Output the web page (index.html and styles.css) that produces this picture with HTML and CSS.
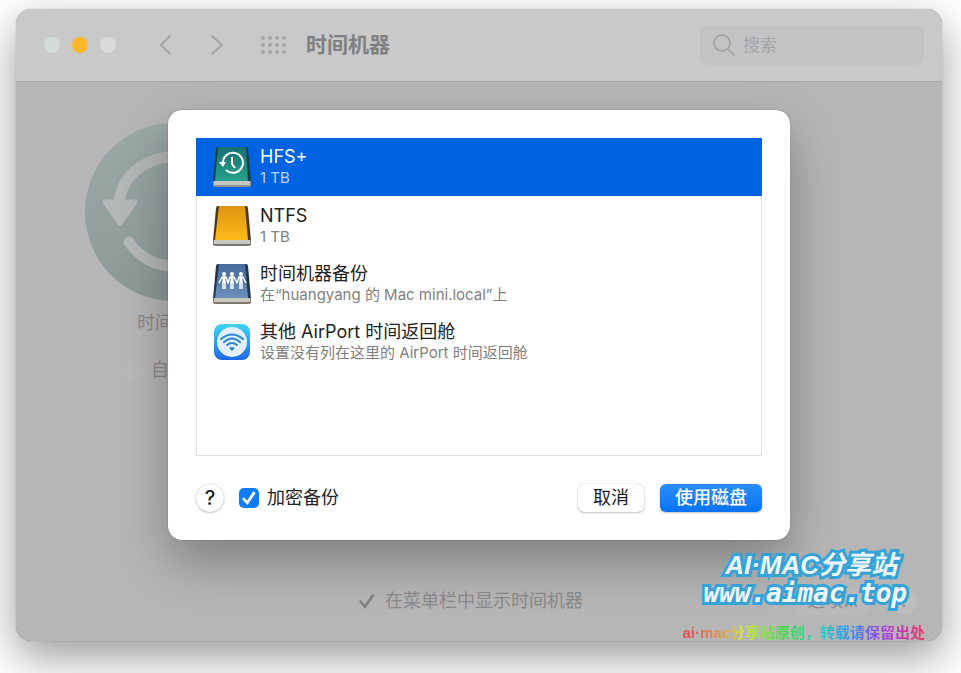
FILE: index.html
```
<!DOCTYPE html>
<html lang="zh-CN">
<head>
    <meta charset="UTF-8">
    <meta name="viewport" content="width=device-width, initial-scale=1.0">
    <title>时间机器</title>
    <link rel="stylesheet" href="styles.css">
</head>
<body>
    <div class="window">
        <header class="toolbar">
            <div class="lights">
                <span class="light light-close"></span>
                <span class="light light-min"></span>
                <span class="light"></span>
            </div>
            <div class="nav">
                <button class="icon-btn" aria-label="返回">
                    <svg width="14" height="22" viewBox="0 0 14 22"><path d="M11 2L2 11l9 9"/></svg>
                </button>
                <button class="icon-btn" aria-label="前进">
                    <svg width="14" height="22" viewBox="0 0 14 22"><path d="M2 2l10 9-10 9"/></svg>
                </button>
            </div>
            <button class="icon-btn grid-btn" aria-label="显示全部">
                <svg width="26" height="20" viewBox="0 0 26 20">
                    <path class="dots" d="M3 3h.01M10 3h.01M17 3h.01M24 3h.01M3 10h.01M10 10h.01M17 10h.01M24 10h.01M3 17h.01M10 17h.01M17 17h.01M24 17h.01"/>
                </svg>
            </button>
            <h1 class="title">时间机器</h1>
            <div class="search">
                <svg width="24" height="24" viewBox="0 0 24 24"><circle cx="10" cy="10" r="8"/><path d="M16 16l6 6"/></svg>
                <input class="search-input" type="search" placeholder="搜索" aria-label="搜索">
            </div>
        </header>

        <main class="content">
            <section class="machine">
                <svg class="machine-icon" width="176" height="178" viewBox="0 0 176 178">
                    <defs>
                        <linearGradient id="machine" x1="0" y1="0" x2="0" y2="1">
                            <stop offset="0" stop-color="#9ba9a7"/>
                            <stop offset="1" stop-color="#8d9997"/>
                        </linearGradient>
                    </defs>
                    <ellipse cx="88" cy="89" rx="88" ry="89" fill="url(#machine)"/>
                    <path class="arrow" d="M34 80C36 54 60 34 88 34c30 0 55 25 55 55s-25 54-55 54c-18 0-34-9-44-24"/>
                    <path class="arrow-head" d="M20 79h30L35 100z"/>
                    <path class="arrow" d="M100 58v31l20 18"/>
                </svg>
                <p class="machine-name">时间机器</p>
                <label class="auto"><input class="auto-check" type="checkbox">自动备份</label>
            </section>
            <footer class="options">
                <label class="menubar">
                    <input class="menubar-check" type="checkbox" checked>在菜单栏中显示时间机器
                </label>
                <button class="options-btn">选项…</button>
                <button class="options-help" aria-label="帮助">?</button>
            </footer>
        </main>

        <div class="dialog" role="dialog" aria-label="选择磁盘">
            <ul class="disk-list">
                <li class="disk selected">
                    <svg class="disk-icon" width="40" height="42" viewBox="0 0 40 42">
                        <path d="M6 1h28q2 0 2 2l3 33H1L4 3q0-2 2-2z" fill="#123f44"/>
                        <path d="M6 1h28l2 34H3z" fill="url(#teal)"/>
                        <path d="M1 35h38v4q0 2-3 2H4q-3 0-3-2z" fill="#8f948f"/>
                        <path d="M2 35h36v4H2z" fill="#c3c8c2"/>
                        <path d="M11 18a10 10 0 1 1 3 6M20 11v7l3 4" fill="none" stroke="#fff" stroke-width="2"/>
                        <path d="M7 16h7l-3 5z" fill="#fff"/>
                        <defs>
                            <linearGradient id="teal" x1="0" y1="0" x2="0" y2="1">
                                <stop offset="0" stop-color="#18706f"/>
                                <stop offset="1" stop-color="#26a18d"/>
                            </linearGradient>
                        </defs>
                    </svg>
                    <div>
                        <div class="disk-name">HFS+</div>
                        <div class="disk-info">1 TB</div>
                    </div>
                </li>
                <li class="disk">
                    <svg class="disk-icon" width="40" height="42" viewBox="0 0 40 42">
                        <path d="M6 1h28q2 0 2 2l3 33H1L4 3q0-2 2-2z" fill="#4b3a18"/>
                        <path d="M7 1h26l3 34H3z" fill="url(#gold)"/>
                        <path d="M1 35h38v4q0 2-3 2H4q-3 0-3-2z" fill="#77756d"/>
                        <path d="M2 35h36v4H2z" fill="#c9c8c0"/>
                        <defs>
                            <linearGradient id="gold" x1="0" y1="0" x2="0" y2="1">
                                <stop offset="0" stop-color="#dc9410"/>
                                <stop offset="1" stop-color="#fdbb18"/>
                            </linearGradient>
                        </defs>
                    </svg>
                    <div>
                        <div class="disk-name">NTFS</div>
                        <div class="disk-info">1 TB</div>
                    </div>
                </li>
                <li class="disk">
                    <svg class="disk-icon" width="40" height="42" viewBox="0 0 40 42">
                        <path d="M6 1h28q2 0 2 2l3 33H1L4 3q0-2 2-2z" fill="#23364f"/>
                        <path d="M7 1h26l3 34H3z" fill="url(#steel)"/>
                        <path d="M1 35h38v4q0 2-3 2H4q-3 0-3-2z" fill="#7c7970"/>
                        <path d="M2 35h36v4H2z" fill="#c7c4ba"/>
                        <g fill="#fff">
                            <circle cx="12" cy="11" r="2"/>
                            <circle cx="20" cy="11" r="2"/>
                            <circle cx="29" cy="11" r="2"/>
                        </g>
                        <g fill="none" stroke="#fff" stroke-linejoin="round">
                            <path stroke-width="1.5" d="M7 20l3-6h4l2 6 2-6h4l3 6 2-6h4l3 6"/>
                            <path stroke-width="3" d="M12 14v6M20 14v6M29 14v6"/>
                            <path stroke-width="1.5" d="M11 19v7M13 19v7M19 19v7M21 19v7M28 19v7M30 19v7"/>
                        </g>
                        <defs>
                            <linearGradient id="steel" x1="0" y1="0" x2="0" y2="1">
                                <stop offset="0" stop-color="#456b9c"/>
                                <stop offset="1" stop-color="#6c8fbd"/>
                            </linearGradient>
                        </defs>
                    </svg>
                    <div>
                        <div class="disk-name">时间机器备份</div>
                        <div class="disk-info">在“huangyang 的 Mac mini.local”上</div>
                    </div>
                </li>
                <li class="disk">
                    <svg class="disk-icon" width="40" height="42" viewBox="0 0 40 42">
                        <defs>
                            <linearGradient id="sky" x1="0" y1="0" x2="0" y2="1">
                                <stop offset="0" stop-color="#3fd5f0"/>
                                <stop offset="1" stop-color="#1c68e6"/>
                            </linearGradient>
                        </defs>
                        <rect x="2" y="3" width="36" height="36" rx="8" fill="url(#sky)"/>
                        <circle cx="20" cy="21" r="15" fill="#e3f0fb"/>
                        <g fill="none" stroke="#2a86d6" stroke-width="2" stroke-linecap="round">
                            <path d="M9 18q11-9 22 0M12 21q8-7 16 0M15 24q5-4 10 0"/>
                        </g>
                        <path d="M17 27q3-2 6 0l-3 3z" fill="#2a86d6"/>
                    </svg>
                    <div>
                        <div class="disk-name">其他 AirPort 时间返回舱</div>
                        <div class="disk-info">设置没有列在这里的 AirPort 时间返回舱</div>
                    </div>
                </li>
            </ul>
            <div class="actions">
                <button class="help-btn" aria-label="帮助">?</button>
                <label class="encrypt"><input class="encrypt-check" type="checkbox" checked>加密备份</label>
                <button class="btn">取消</button>
                <button class="btn btn-primary">使用磁盘</button>
            </div>
        </div>

        <div class="watermark">
            <div class="mark-name">AI·MAC分享站</div>
            <div class="mark-url">www.aimac.top</div>
            <div class="mark-note">ai·mac分享站原创，转载请保留出处</div>
        </div>
    </div>
</body>
</html>
```

FILE: styles.css
```
* {
    box-sizing: border-box;
    margin: 0;
    padding: 0;
}

body {
    display: flex;
    min-height: 100vh;
    padding: 9px 19px 32px 16px;
    background-color: #fff;
    color: #222;
    font-family: Inter, "Noto Sans CJK SC", sans-serif;
    font-size: 18px;
    line-height: 24px;
}

button,
input {
    font: inherit;
    color: inherit;
}

button {
    border: none;
    background: none;
}

/* 窗口 */
.window {
    position: relative;
    flex: 1;
    display: flex;
    flex-direction: column;
    border-radius: 15px;
    background-color: #b6b6b6;
    box-shadow: 0 0 1px rgba(0, 0, 0, 0.4), 0 16px 44px rgba(0, 0, 0, 0.4);
}

.toolbar {
    display: flex;
    align-items: center;
    height: 73px;
    padding: 0 18px 0 28px;
    border-bottom: 1px solid #a5a5a5;
    border-radius: 15px 15px 0 0;
    background-color: #c8c9c8;
    color: #808080;
}

.toolbar svg {
    display: block;
    fill: none;
    stroke: #a6a6a6;
    stroke-width: 2;
    stroke-linecap: round;
    stroke-linejoin: round;
}

.toolbar .dots {
    stroke-width: 4;
}

.lights {
    display: flex;
    gap: 12px;
}

.light {
    width: 16px;
    height: 16px;
    border-radius: 50%;
    background-color: #d9dad9;
}

.light-close {
    background-color: #d3dbd8;
}

.light-min {
    background-color: #fdb827;
}

.nav {
    display: flex;
    gap: 37px;
    margin-left: 43px;
}

.grid-btn {
    margin-left: 36px;
}

.title {
    margin-left: 20px;
    font-size: 21px;
    font-weight: 700;
}

.search {
    display: flex;
    align-items: center;
    gap: 7px;
    width: 224px;
    height: 39px;
    margin-left: auto;
    padding: 0 12px;
    border-radius: 8px;
    background-color: #c3c3c3;
}

.search-input {
    flex: 1;
    min-width: 0;
    border: none;
    background: none;
    font-size: 17px;
}

.search-input::placeholder {
    color: #a6a6a6;
}

.content {
    flex: 1;
    display: flex;
    flex-direction: column;
    justify-content: space-between;
    padding: 41px 25px 26px 69px;
    color: #8b8b8b;
}

.machine {
    display: flex;
    flex-direction: column;
    align-items: center;
    width: 176px;
}

.machine-icon {
    margin-bottom: 10px;
}

.arrow {
    fill: none;
    stroke: #b4b8b7;
    stroke-width: 11;
    stroke-linecap: round;
}

.arrow-head {
    fill: #b4b8b7;
    stroke: #b4b8b7;
    stroke-width: 5;
    stroke-linejoin: round;
}

.auto {
    display: flex;
    align-items: center;
    gap: 10px;
    margin-top: 23px;
}

.auto-check {
    appearance: none;
    width: 18px;
    height: 18px;
    border-radius: 4px;
    background-color: #b9b9b9;
}

.options {
    display: flex;
    align-items: center;
    gap: 20px;
    padding-left: 274px;
}

.menubar {
    display: flex;
    align-items: center;
    gap: 10px;
    margin-right: auto;
}

.menubar-check {
    appearance: none;
    width: 16px;
    height: 16px;
    background-color: #828282;
    clip-path: polygon(0 55%, 12% 43%, 36% 72%, 84% 5%, 98% 14%, 38% 98%);
}

.options-btn {
    width: 76px;
    height: 28px;
    border-radius: 6px;
    background-color: #b9b9b9;
}

.options-help {
    width: 26px;
    height: 26px;
    border-radius: 50%;
    background-color: #bdbdbd;
}

/* 对话框 */
.dialog {
    position: absolute;
    top: 101px;
    left: 50%;
    width: 622px;
    padding: 28px;
    border-radius: 14px;
    background-color: #fff;
    box-shadow: 0 0 1px rgba(0, 0, 0, 0.6), 0 22px 50px rgba(0, 0, 0, 0.3);
    transform: translateX(-50%);
}

.disk-list {
    height: 318px;
    border: 1px solid #dedede;
    list-style: none;
}

.disk {
    display: flex;
    align-items: center;
    gap: 8px;
    height: 58px;
    padding-left: 15px;
}

.disk-name {
    line-height: 22px;
}

.disk-info {
    color: #808080;
    font-size: 15px;
    line-height: 20px;
}

.selected {
    margin: -1px -1px 1px;
    padding-left: 16px;
    background-color: #0063e1;
    color: #fff;
}

.selected .disk-info {
    color: #b9d5f8;
}

.actions {
    display: flex;
    align-items: center;
    margin-top: 28px;
}

.help-btn {
    width: 28px;
    height: 28px;
    border-radius: 50%;
    font-size: 20px;
    font-weight: 500;
    box-shadow: 0 0 1px rgba(0, 0, 0, 0.4), 0 1px 2px rgba(0, 0, 0, 0.2);
}

.encrypt {
    display: flex;
    align-items: center;
    gap: 8px;
    margin-left: 15px;
    margin-right: auto;
}

.encrypt-check {
    appearance: none;
    display: grid;
    place-items: center;
    width: 20px;
    height: 20px;
    border-radius: 5px;
    background-color: #0f7bf5;
}

.encrypt-check::before {
    content: "";
    width: 14px;
    height: 14px;
    background-color: #fff;
    clip-path: polygon(0 58%, 14% 44%, 36% 70%, 80% 2%, 98% 14%, 39% 100%);
}

.btn {
    height: 28px;
    padding: 0 15px;
    border-radius: 6px;
    box-shadow: 0 0 1px rgba(0, 0, 0, 0.4), 0 1px 2px rgba(0, 0, 0, 0.2);
}

.btn-primary {
    margin-left: 16px;
    background: linear-gradient(#2b8dfb, #0873f3);
    color: #fff;
    font-weight: 500;
}

/* 右下角水印 */
.watermark {
    position: absolute;
    right: 17px;
    bottom: -4px;
    color: #eef6fd;
    font-weight: 700;
    text-align: right;
    white-space: nowrap;
}

.mark-name,
.mark-url {
    font-size: 26px;
    font-style: italic;
    line-height: 28px;
    paint-order: stroke fill;
    -webkit-text-stroke: 6px #35a3d8;
}

.mark-name {
    padding-right: 28px;
    font-family: "Liberation Sans", "Noto Sans CJK SC", sans-serif;
}

.mark-url {
    padding-right: 18px;
    font-family: "DejaVu Sans Mono", monospace;
}

.mark-note {
    margin-top: 14px;
    background: linear-gradient(90deg, #dc4656, #e39a4c 17%, #d5e83a 25%, #3fdc4a 42%, #35c9c4 58%, #3a8ee8 70%, #a045ea 82%, #d834a4 92%, #e0405c);
    background-clip: text;
    color: transparent;
    font-family: "Liberation Sans", "Noto Sans CJK SC", sans-serif;
    font-size: 15px;
}
```
